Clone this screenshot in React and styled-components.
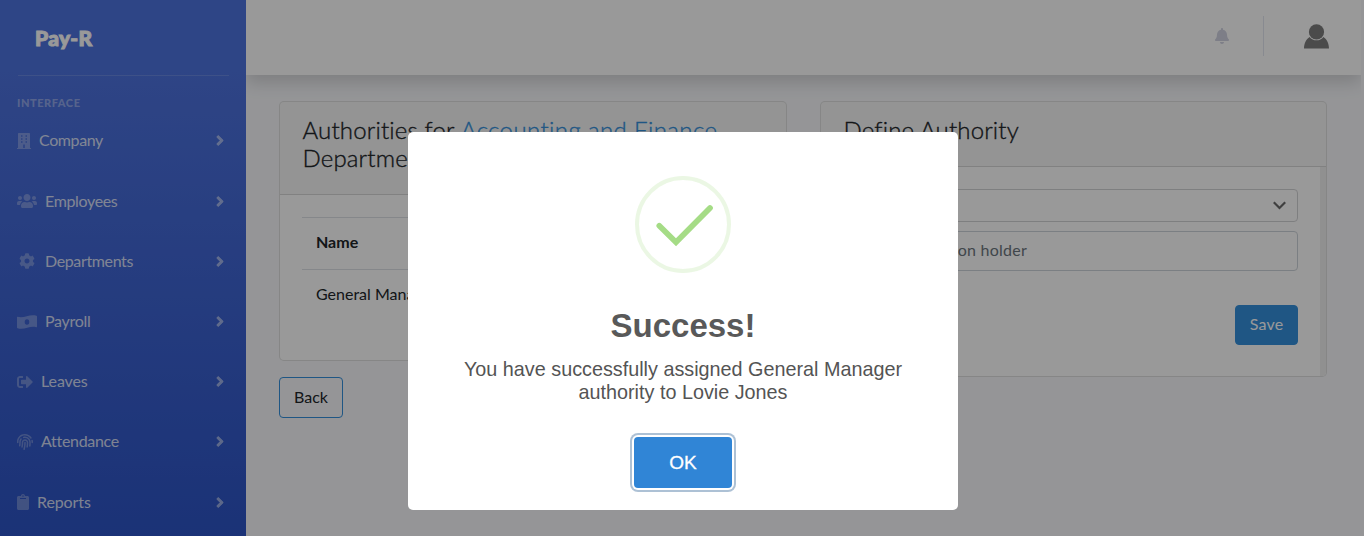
import React from "react";
import styled, { createGlobalStyle } from "styled-components";
import {
  FaUsers,
  FaCog,
  FaSignOutAlt,
  FaFingerprint,
  FaClipboard,
  FaAngleRight,
  FaBell,
} from "react-icons/fa";

const GlobalStyle = createGlobalStyle`
  *, *::before, *::after { box-sizing: border-box; }
  html, body { margin: 0; height: 100%; overflow: hidden; }
  body {
    background: #f8f9fc;
    color: #212529;
    font: 400 16px/1.5 Lato, "Open Sans", sans-serif;
  }
  button, input { font: inherit; }
`;

const Page = styled.div`
  display: flex;
  height: 100vh;
  overflow: hidden;
`;

const Sidebar = styled.nav`
  flex: 0 0 246px;
  height: 690px;
  background: linear-gradient(180deg, #4e73df 10%, #224abe 100%);
`;

const Brand = styled.div`
  height: 75px;
  padding-left: 35px;
  font-size: 21px;
  font-weight: 900;
  line-height: 75px;
  letter-spacing: ${(p) => p.$track}px;
  color: #fff;
  -webkit-text-stroke: 1px #fff;
`;

const SidebarRule = styled.hr`
  height: 1px;
  margin: 0 17px 0 18px;
  border: 0;
  background: rgba(255, 255, 255, 0.15);
`;

const SidebarHeading = styled.div`
  height: 35.4px;
  padding: 18px 17px 0;
  font-size: 11px;
  font-weight: 900;
  line-height: 18px;
  letter-spacing: ${(p) => p.$track}px;
  color: rgba(255, 255, 255, 0.4);
`;

const NavItem = styled.a`
  display: flex;
  align-items: center;
  height: 60.2px;
  padding: 0 22px 0 17px;
  color: rgba(255, 255, 255, 0.8);
`;

const NavIcon = styled.span`
  display: flex;
  justify-content: center;
  width: ${(p) => p.$width}px;
  margin-right: 8px;
  padding-bottom: 1px;
  color: rgba(255, 255, 255, 0.3);

  svg {
    width: ${(p) => p.$glyph || p.$width}px;
    height: 16px;
    flex: none;
  }
`;

const NavLabel = styled.span`
  flex: 1;
  padding-bottom: 2px;
  letter-spacing: ${(p) => p.$track}px;
`;

const NavArrow = styled(FaAngleRight)`
  width: 8px;
  height: 17px;
  margin-bottom: 1px;
  color: rgba(255, 255, 255, 0.5);
  stroke: currentColor;
  stroke-width: 14px;
`;

const Main = styled.main`
  flex: 1;
  min-width: 0;
  margin-right: 3px;
  overflow: hidden;
`;

const Topbar = styled.header`
  display: flex;
  align-items: center;
  justify-content: flex-end;
  height: 75px;
  padding: 0 32px 3px 0;
  background: #fff;
  box-shadow: 0 8px 16px rgba(0, 0, 0, 0.15);
`;

const Bell = styled(FaBell)`
  width: 14px;
  height: 16px;
  color: #d1d3e2;
`;

const TopbarDivider = styled.div`
  width: 1px;
  height: 40px;
  margin: 0 40px 0 34px;
  background: #e3e6f0;
`;

const Content = styled.div`
  display: grid;
  grid-template-columns: 508px 507px;
  column-gap: 33px;
  align-items: start;
  padding: 26px 34px 0 33px;
`;

const Column = styled.section`
  display: flex;
  flex-direction: column;
  align-items: flex-start;
  gap: 16px;
`;

const Card = styled.div`
  width: 100%;
  height: ${(p) => p.$height}px;
  border: 1px solid rgba(0, 0, 0, 0.125);
  border-radius: 5px;
  background: #fff;
  overflow: hidden;
`;

const CardHeader = styled.div`
  height: ${(p) => p.$height}px;
  padding: 14px 23px 0;
  border-bottom: 1px solid rgba(0, 0, 0, 0.125);
  background: rgba(0, 0, 0, 0.03);
`;

const CardTitle = styled.h4`
  margin: 0 0 0 -0.5px;
  font-size: 24px;
  font-weight: 300;
  line-height: 28px;
  letter-spacing: ${(p) => p.$track}px;
  white-space: nowrap;
  -webkit-text-stroke: 0.35px currentColor;
`;

const DepartmentName = styled.span`
  color: #3490dc;
  letter-spacing: 0.4px;
`;

const Table = styled.div`
  margin: 22px;
`;

const TableCell = styled.div`
  height: 52px;
  padding: 12px 14px;
  border-top: 1px solid #dee2e6;
  font-weight: ${(p) => (p.$head ? 700 : 400)};
`;

const FormBody = styled.div`
  height: 209px;
  padding: 22px 22px 0;
  border-right: 6px solid #f1f1f1;
`;

const SelectBox = styled.div`
  display: flex;
  align-items: center;
  justify-content: flex-end;
  height: 33px;
  margin-bottom: 9px;
  padding-right: 11px;
  border: 1px solid #d3d4d6;
  border-radius: 4px;
`;

const TextInput = styled.input`
  display: block;
  width: 100%;
  height: 40px;
  margin-bottom: 34px;
  padding: 0 13px 3px;
  border: 1px solid #ced4da;
  border-radius: 4px;
  background: #fff;
  letter-spacing: ${(p) => p.$track}px;

  &::placeholder {
    color: #6c757d;
    opacity: 1;
  }
`;

const Button = styled.button`
  display: block;
  width: ${(p) => p.$width}px;
  height: ${(p) => p.$height}px;
  margin-left: ${(p) => (p.$end ? "auto" : 0)};
  padding: 0 0 2px;
  border: 1px solid #3490dc;
  border-radius: 4px;
  background: ${(p) => (p.$solid ? "#3490dc" : "transparent")};
  color: ${(p) => (p.$solid ? "#fff" : "#212529")};
  letter-spacing: ${(p) => p.$track || 0}px;
`;

const Backdrop = styled.div`
  position: fixed;
  inset: 0;
  padding: 132px 0 0 408px;
  background: rgba(0, 0, 0, 0.4);
`;

const Dialog = styled.div`
  display: flex;
  flex-direction: column;
  align-items: center;
  width: 550px;
  height: 378px;
  padding-top: 44px;
  border-radius: 5px;
  background: #fff;
  color: #545454;
  font-family: "Liberation Sans", Arial, sans-serif;
  text-align: center;
`;

const DialogTitle = styled.h2`
  margin: 33px 0 0;
  font-size: 33px;
  font-weight: 700;
  line-height: 40px;
  color: #595959;
`;

const DialogText = styled.p`
  width: 470px;
  margin: 12px 0 0;
  font-size: 19.8px;
  line-height: 23px;
`;

const ConfirmButton = styled.button`
  width: 98px;
  height: 51px;
  margin-top: 33px;
  padding: 1px 0 0;
  border: 0;
  border-radius: 4px;
  background: #3085d6;
  box-shadow: 0 0 0 2px #fff, 0 0 0 4px rgba(50, 100, 150, 0.4);
  color: #fff;
  font-size: 19px;
  -webkit-text-stroke: 0.3px #fff;
`;

const BuildingIcon = () => (
  <svg viewBox="0 0 14 16" fill="currentColor">
    <path
      fillRule="evenodd"
      d="M1.700 0H12.300Q13 0 13 0.700V15H14V16H0V15H1V0.700Q1 0 1.700 0ZM4 2.300V3.700H5.500V2.300ZM8.500 2.300V3.700H10V2.300ZM4 5.300V6.700H5.500V5.300ZM8.500 5.300V6.700H10V5.300ZM4 8.300V9.700H5.500V8.300ZM8.500 8.300V9.700H10V8.300ZM6.200 11.500V15H7.800V11.500Z"
    />
  </svg>
);

const BanknoteIcon = () => (
  <svg viewBox="0 0 20 16" fill="currentColor">
    <path
      fillRule="evenodd"
      d="M0.600 2.700C7 4.700 12.500 -0.300 19.400 1.700Q20 1.900 20 2.600V12.600Q20 13.500 19.200 13.300C13 11.400 7.500 16.300 0.600 14.300Q0 14.100 0 13.400V3.300Q0 2.500 0.600 2.700ZM10 5.200A2.300 2.800 0 1 0 10 10.800A2.300 2.800 0 1 0 10 5.200Z"
    />
  </svg>
);

const UserIcon = () => (
  <svg width="25" height="25" viewBox="0 0 25 25" fill="#7d7d7d">
    <circle cx="12.5" cy="7.9" r="7.6" />
    <path d="M0 24.400C0 19.500 2.100 15.100 5.600 12.900A8.600 8.600 0 0 0 19.400 12.900C22.900 15.100 25 19.500 25 24.400Z" />
  </svg>
);

const ChevronDown = () => (
  <svg width="13" height="9" viewBox="0 0 13 9" fill="none" stroke="#6a6a6a" strokeWidth="2.200">
    <path d="M0.800 1.200L6.500 7L12.200 1.200" />
  </svg>
);

const SuccessMark = () => (
  <svg width="96" height="97" viewBox="0 0 96 97" fill="none">
    <ellipse cx="48" cy="48.500" rx="46" ry="46.500" stroke="#a5dc86" strokeOpacity="0.22" strokeWidth="4" />
    <path d="M24.300 49.800L41 66.300L75 32" stroke="#a5dc86" strokeWidth="5.700" strokeLinecap="round" />
  </svg>
);

const navItems = [
  { label: "Company", icon: BuildingIcon, width: 14, track: -0.4 },
  { label: "Employees", icon: FaUsers, width: 20, track: -0.35 },
  { label: "Departments", icon: FaCog, width: 20, glyph: 16, track: -0.37 },
  { label: "Payroll", icon: BanknoteIcon, width: 20, track: -0.3 },
  { label: "Leaves", icon: FaSignOutAlt, width: 16, track: -0.1 },
  { label: "Attendance", icon: FaFingerprint, width: 16, track: -0.3 },
  { label: "Reports", icon: FaClipboard, width: 12, track: -0.1 },
];

export default function App() {
  return (
    <>
      <GlobalStyle />
      <Page>
        <Sidebar>
          <Brand $track={0.3}>Pay-R</Brand>
          <SidebarRule />
          <SidebarHeading $track={0.55}>INTERFACE</SidebarHeading>
          {navItems.map(({ label, icon: Icon, width, glyph, track }) => (
            <NavItem key={label}>
              <NavIcon $width={width} $glyph={glyph}>
                <Icon />
              </NavIcon>
              <NavLabel $track={track}>{label}</NavLabel>
              <NavArrow />
            </NavItem>
          ))}
        </Sidebar>
        <Main>
          <Topbar>
            <Bell />
            <TopbarDivider />
            <UserIcon />
          </Topbar>
          <Content>
            <Column>
              <Card $height={260}>
                <CardHeader $height={93}>
                  <CardTitle $track={0.17}>
                    Authorities for <DepartmentName>Accounting and Finance</DepartmentName>
                    <br />
                    Department
                  </CardTitle>
                </CardHeader>
                <Table>
                  <TableCell $head>Name</TableCell>
                  <TableCell>General Manager</TableCell>
                </Table>
              </Card>
              <Button $width={64} $height={41}>Back</Button>
            </Column>
            <Column>
              <Card $height={276}>
                <CardHeader $height={65}>
                  <CardTitle $track={0.15}>Define Authority</CardTitle>
                </CardHeader>
                <FormBody>
                  <SelectBox>
                    <ChevronDown />
                  </SelectBox>
                  <TextInput placeholder="Select a position holder" $track={0.24} />
                  <Button $solid $end $width={63} $height={40} $track={0.2}>Save</Button>
                </FormBody>
              </Card>
            </Column>
          </Content>
        </Main>
      </Page>
      <Backdrop>
        <Dialog role="dialog">
          <SuccessMark />
          <DialogTitle>Success!</DialogTitle>
          <DialogText>You have successfully assigned General Manager authority to Lovie Jones</DialogText>
          <ConfirmButton>OK</ConfirmButton>
        </Dialog>
      </Backdrop>
    </>
  );
}
